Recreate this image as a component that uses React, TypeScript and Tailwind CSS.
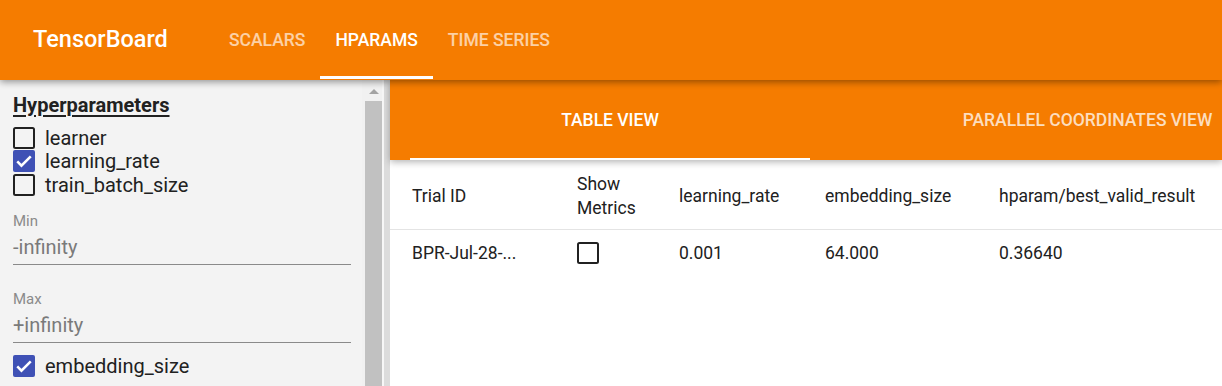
import React from 'react'

const font = { fontFamily: 'Roboto, "Noto Sans", Arial, sans-serif' }

const Box = ({ checked }: { checked?: boolean }) =>
  checked ? (
    <span className="flex h-[22px] w-[22px] shrink-0 items-center justify-center rounded-[2px] bg-[#3f51b5]">
      <svg viewBox="0 0 24 24" className="h-[18px] w-[18px]" fill="none">
        <path d="M3 12.6 8.6 18.2 21 5.8" stroke="#fff" strokeWidth="3.4" />
      </svg>
    </span>
  ) : (
    <span className="block h-[22px] w-[22px] shrink-0 rounded-[2.5px] border-[2.5px] border-[#212121]" />
  )

const Param = ({ label, checked }: { label: string; checked?: boolean }) => (
  <div className="flex h-[23.5px] items-center gap-[10px]">
    <Box checked={checked} />
    <span className="text-[20px] leading-[24px] text-[#212121]">{label}</span>
  </div>
)

const Bound = ({ label, value }: { label: string; value: string }) => (
  <div className="mr-[11px] border-b border-[#8a8a8a] pb-[5px]">
    <div className="text-[15px] leading-[18px] text-[#8a8a8a]">{label}</div>
    <div className="mt-[5px] text-[20px] leading-[24px] text-[#7a7a7a]">{value}</div>
  </div>
)

const App = () => {
  const navTabs = ['SCALARS', 'HPARAMS', 'TIME SERIES']
  const columns = ['Trial ID', 'Show Metrics', 'learning_rate', 'embedding_size', 'hparam/best_valid_result']

  return (
    <div className="flex h-[386px] w-[1222px] flex-col overflow-hidden bg-white" style={font}>
      {/* Top bar */}
      <header className="relative z-20 flex h-[80px] shrink-0 items-stretch bg-[#f57c00] shadow-[0_2px_7px_rgba(0,0,0,0.4)]">
        <div className="flex w-[214px] items-center pl-[33px] text-[23.5px] font-medium text-white">TensorBoard</div>
        {navTabs.map((tab) => (
          <div
            key={tab}
            className={`relative flex items-center px-[15px] text-[17.5px] font-medium ${
              tab === 'HPARAMS' ? 'text-white' : 'text-white/65'
            }`}
          >
            {tab}
            {tab === 'HPARAMS' && <span className="absolute bottom-[1px] left-0 right-0 h-[3px] bg-white" />}
          </div>
        ))}
      </header>

      <div className="flex min-h-0 flex-1">
        {/* Sidebar */}
        <aside className="flex w-[390px] shrink-0">
          <div className="w-[362px] bg-[#f3f3f3] pl-[13px] pt-[13px]">
            <div className="text-[20px] font-bold leading-[24px] text-[#212121] underline decoration-[1.5px] underline-offset-[3px]">
              Hyperparameters
            </div>
            <div className="mt-[9px]">
              <Param label="learner" />
              <Param label="learning_rate" checked />
              <Param label="train_batch_size" />
            </div>
            <div className="mt-[15.5px] flex flex-col gap-[25px]">
              <Bound label="Min" value="-infinity" />
              <Bound label="Max" value="+infinity" />
            </div>
            <div className="mt-[11px]">
              <Param label="embedding_size" checked />
            </div>
          </div>
          <div className="flex w-[20px] flex-col bg-[#f1f1f1] pl-[3px]">
            <div className="ml-[4px] mt-[9px] h-0 w-0 border-x-[5px] border-b-[5px] border-x-transparent border-b-[#a3a3a3]" />
            <div className="mt-[7px] flex-1 bg-[#c1c1c1]" />
          </div>
          <div className="w-[2px] bg-[#f7f7f7]" />
          <div className="w-[6px] bg-[#dcdcdc]" />
        </aside>

        {/* Main */}
        <main className="flex min-w-0 flex-1 flex-col">
          <div className="relative z-10 flex h-[80px] shrink-0 overflow-hidden bg-[#f57c00] pl-[20px] shadow-[0_2px_7px_rgba(0,0,0,0.3)]">
            <div className="relative flex w-[400px] shrink-0 items-center justify-center text-[17.5px] font-medium text-white">
              TABLE VIEW
              <span className="absolute bottom-0 left-0 right-0 h-[2.5px] bg-white" />
            </div>
            <div className="flex w-[555px] shrink-0 items-center justify-center text-[17.5px] font-medium text-white/75">
              PARALLEL COORDINATES VIEW
            </div>
          </div>

          <div className="text-[17.5px] leading-[24px] text-[#212121]">
            <div className="grid h-[70px] grid-cols-[165px_102px_146px_174px_1fr] items-center border-b border-[#e4e4e4] pl-[22px] pt-[2px]">
              {columns.map((c) => (
                <div key={c} className={c === 'Show Metrics' ? 'w-[70px]' : ''}>
                  {c}
                </div>
              ))}
            </div>
            <div className="grid h-[44px] grid-cols-[165px_102px_146px_174px_1fr] items-center pl-[22px] pt-[1px]">
              <div>BPR-Jul-28-...</div>
              <div>
                <Box />
              </div>
              <div>0.001</div>
              <div>64.000</div>
              <div>0.36640</div>
            </div>
          </div>
        </main>
      </div>
    </div>
  )
}

export default App
